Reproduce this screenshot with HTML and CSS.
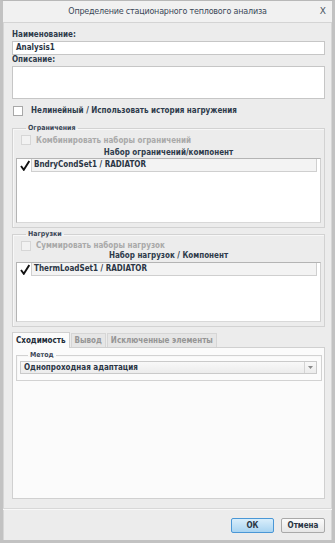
FILE: index.html
```html
<!DOCTYPE html>
<html>
    <head>
        <title>Определение стационарного теплового анализа</title>
        <link rel="stylesheet" href="styles.css">
        <meta charset="utf-8">
    </head>
    <body>
        <div class="window">
            <div class="titlebar">
                <span class="title">Определение стационарного теплового анализа</span>
                <span class="close">X</span>
            </div>

            <div class="content">
                <div class="label">Наименование:</div>
                <div class="input">Analysis1</div>
                <div class="label">Описание:</div>
                <div class="textarea"></div>

                <div class="check_row main_check">
                    <span class="box"></span>
                    <span class="bold">Нелинейный / Использовать история нагружения</span>
                </div>

                <fieldset class="group">
                    <legend>Ограничения</legend>
                    <div class="check_row disabled">
                        <span class="box"></span>
                        <span class="bold">Комбинировать наборы ограничений</span>
                    </div>
                    <div class="list_head">Набор ограничений/компонент</div>
                    <div class="listbox tall">
                        <div class="list_row">
                            <svg class="tick" width="10" height="11" viewBox="0 0 10 11"><path d="M1 6 L3.8 9.8 L9.3 1" fill="none" stroke="#111" stroke-width="1.9"/></svg>
                            <span class="row_text">BndryCondSet1 / RADIATOR</span>
                        </div>
                    </div>
                </fieldset>

                <fieldset class="group second">
                    <legend>Нагрузки</legend>
                    <div class="check_row disabled">
                        <span class="box"></span>
                        <span class="bold">Суммировать наборы нагрузок</span>
                    </div>
                    <div class="list_head">Набор нагрузок / Компонент</div>
                    <div class="listbox">
                        <div class="list_row">
                            <svg class="tick" width="10" height="11" viewBox="0 0 10 11"><path d="M1 6 L3.8 9.8 L9.3 1" fill="none" stroke="#111" stroke-width="1.9"/></svg>
                            <span class="row_text">ThermLoadSet1 / RADIATOR</span>
                        </div>
                    </div>
                </fieldset>

                <div class="tabs">
                    <div class="tab active">Сходимость</div>
                    <div class="tab">Вывод</div>
                    <div class="tab">Исключенные элементы</div>
                </div>
                <div class="tab_panel">
                    <fieldset class="group method">
                        <legend>Метод</legend>
                        <div class="combo">
                            <span class="combo_text">Однопроходная адаптация</span>
                            <span class="combo_btn"><svg width="5" height="3" viewBox="0 0 5 3"><path d="M0 0 H5 L2.5 3 Z" fill="#8a8a8a"/></svg></span>
                        </div>
                    </fieldset>
                </div>
            </div>

            <div class="footer">
                <button class="btn ok">ОК</button>
                <button class="btn">Отмена</button>
            </div>
        </div>
    </body>
</html>
```

FILE: styles.css
```css
body{
    margin: 0;
    font-family: "DejaVu Sans", Verdana, sans-serif;
    font-size: 8px;
    color: #2e3b4b;
}

/* bold text in the dialog is narrower, like Tahoma */
.label, .input, .bold, .list_head, .row_text, .tab, .combo_text, .btn, fieldset.group legend{
    font-family: "DejaVu Sans Condensed", "DejaVu Sans", sans-serif;
    font-stretch: condensed;
    font-weight: bold;
}

div.window{
    width: 335px;
    height: 543px;
    box-sizing: border-box;
    background-color: #ececec;
    border: 3px solid #c2c2c2;
    border-top: 1px solid #b8b8b8;
    box-shadow: inset 1px 0 0 #d6d6d6, inset -1px 0 0 #d6d6d6;
    display: flex;
    flex-direction: column;
}

div.titlebar{
    height: 21px;
    flex-shrink: 0;
    background-color: #f1f1f1;
    border-bottom: 1px solid #d4d4d4;
    display: flex;
    align-items: center;
    justify-content: center;
    position: relative;
}
.title{
    color: #3a4757;
    font-size: 8px;
    letter-spacing: -0.2px;
}
.close{
    position: absolute;
    right: 6px;
    top: 5px;
    font-size: 9px;
    color: #4a5563;
}

div.content{
    padding: 7px 7px 0 9px;
}

.label{
    height: 10px;
    line-height: 10px;
    margin-bottom: 1px;
}
.input{
    height: 14px;
    box-sizing: border-box;
    background-color: #fff;
    border: 1px solid #c6c6c6;
    line-height: 12px;
    padding-left: 3px;
    color: #2a3544;
}
.textarea{
    height: 33px;
    box-sizing: border-box;
    background-color: #fff;
    border: 1px solid #c6c6c6;
}

.check_row{
    display: flex;
    align-items: center;
    gap: 8px;
    height: 12px;
}
.check_row .box{
    width: 8px;
    height: 8px;
    background-color: #fff;
    border: 1px solid #a8a8a8;
    flex-shrink: 0;
}
.main_check{
    height: 13px;
    margin-top: 5px;
    padding-left: 1px;
}
.check_row.disabled{
    color: #a9a9a9;
    margin-top: 1px;
    padding-left: 5px;
    gap: 5px;
}
.check_row.disabled .box{
    background-color: #f2f2f2;
    border-color: #d6d6d6;
}

fieldset.group{
    margin: 6px 0 0 0;
    padding: 0 3px 4px 3px;
    border: 1px solid #d2d2d2;
    box-shadow: inset 1px 1px 0 #f7f7f7;
}
fieldset.group legend{
    padding: 0 2px;
    margin-left: 10px;
    font-size: 7px;
    line-height: 10px;
    color: #3a4656;
}
fieldset.second{ margin-top: 1px; }
fieldset.second .check_row{ height: 11px; }

.list_head{
    text-align: center;
    line-height: 10px;
    height: 10px;
    margin-top: 2px;
}
fieldset.second .list_head{ margin-top: 0; margin-bottom: 1px; }

.listbox{
    height: 60px;
    box-sizing: border-box;
    background-color: #fff;
    border: 1px solid #b4b4b4;
    border-right-color: #d0d0d0;
    border-bottom-color: #d8d8d8;
    padding: 0 3px 0 2px;
}
.listbox.tall{ height: 65px; }

.list_row{
    display: flex;
    align-items: flex-start;
}
.tick{
    width: 10px;
    height: 11px;
    margin: 1px 1px 0 1px;
    flex-shrink: 0;
}
.row_text{
    flex: 1;
    height: 13px;
    box-sizing: border-box;
    line-height: 12px;
    padding-left: 2px;
    background-color: #f3f3f3;
    border: 1px solid #cfcfcf;
    border-top: none;
    color: #2a3544;
}

.tabs{
    display: flex;
    align-items: flex-end;
    margin-top: 5px;
    height: 15px;
}
.tab{
    height: 13px;
    line-height: 13px;
    padding: 0 3px;
    margin-right: 1px;
    background-color: #e6e6e6;
    border: 1px solid #d6d6d6;
    border-bottom: none;
    color: #959595;
}
.tab.active{
    height: 15px;
    line-height: 15px;
    background-color: #fbfbfb;
    border-color: #d0d0d0;
    color: #222c38;
    position: relative;
    top: 1px;
}

.tab_panel{
    height: 152px;
    box-sizing: border-box;
    background-color: #fbfbfb;
    border: 1px solid #d0d0d0;
    padding: 0 2px 0 3px;
}
fieldset.method{
    margin-top: 2px;
    padding: 0 4px 6px 3px;
    background-color: #fbfbfb;
}
fieldset.method legend{ margin-left: 8px; }

.combo{
    height: 13px;
    box-sizing: border-box;
    margin-top: 1px;
    display: flex;
    background: linear-gradient(#f8f8f8, #ececec);
    border: 1px solid #cacaca;
}
.combo_text{
    flex: 1;
    line-height: 11px;
    padding-left: 3px;
    color: #2a3544;
}
.combo_btn{
    width: 11px;
    border-left: 1px solid #d4d4d4;
    display: flex;
    align-items: center;
    justify-content: center;
}

div.footer{
    margin-top: 9px;
    flex: 1;
    border-top: 1px solid #d8d8d8;
    box-shadow: inset 0 1px 0 #f8f8f8;
    display: flex;
    justify-content: flex-end;
    align-items: flex-start;
    gap: 7px;
    padding: 9px 7px 0 0;
}
.btn{
    height: 15px;
    width: 44px;
    padding: 0;
    font-size: 8px;
    color: #2a3544;
    background: linear-gradient(#fbfbfb, #e6e6e6);
    border: 1px solid #a9a9a9;
    border-radius: 2px;
}
.btn.ok{
    width: 43px;
    background: linear-gradient(#d9eefb, #a9d4f1);
    border-color: #4a97d6;
}
```
